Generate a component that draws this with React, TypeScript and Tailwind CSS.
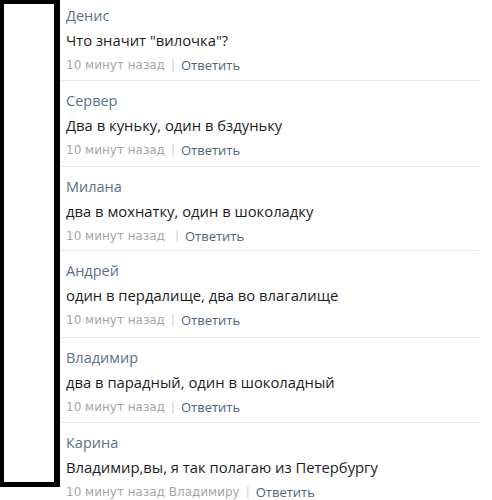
import React from "react";

const comments = [
  { name: "Денис", text: "Что значит \"вилочка\"?", extra: "", gap: false, pb: "pb-[3px]" },
  { name: "Сервер", text: "Два в куньку, один в бздуньку", extra: "", gap: false, pb: "pb-[4px]" },
  { name: "Милана", text: "два в мохнатку, один в шоколадку", extra: "", gap: true, pb: "pb-[2px]" },
  { name: "Андрей", text: "один в пердалище, два во влагалище", extra: "", gap: false, pb: "pb-[5px]" },
  { name: "Владимир", text: "два в парадный, один в шоколадный", extra: "", gap: false, pb: "pb-[3px]" },
  { name: "Карина", text: "Владимир,вы, я так полагаю из Петербургу", extra: "Владимиру", gap: false, pb: "pb-[3px]" },
];

export default function App() {
  return (
    <div className="w-[492px] h-[500px] bg-white overflow-hidden flex">
      <div className="w-[60px] h-[487px] shrink-0 border-l-[4px] border-t-[4px] border-r-[6px] border-b-[5px] border-black bg-white" />
      <div className="flex flex-col w-[419px]">
        {comments.map((c, i) => (
          <div
            key={i}
            className={
              (i === 0 ? "pt-[5px] " : "pt-[9px] border-t border-[#e6e8eb] ") +
              "pl-[6px] " + c.pb
            }
          >
            <div className="h-[22px] leading-[22px] text-[14.5px] text-[#5b7089] whitespace-nowrap" style={{ fontFamily: '"Open Sans", "DejaVu Sans", sans-serif' }}>
              {c.name}
            </div>
            <div className="h-[26px] leading-[26px] text-[14.8px] text-[#1c1c1c] whitespace-nowrap" style={{ fontFamily: '"Open Sans", "DejaVu Sans", sans-serif' }}>
              {c.text}
            </div>
            <div className="h-[24px] leading-[24px] text-[12px] text-[#a6a6a6] flex items-center whitespace-nowrap" style={{ fontFamily: '"DejaVu Sans", sans-serif' }}>
              <span>10 минут назад{c.extra ? " " + c.extra : ""}</span>
              <span className={(c.gap ? "ml-[10px] " : "ml-[6px] ") + "mr-[6px] text-[#d0d0d0]"}>|</span>
              <span className="text-[#4e6580]" style={{ fontFamily: '"Open Sans", sans-serif', fontSize: 13 }}>Ответить</span>
            </div>
          </div>
        ))}
      </div>
    </div>
  );
}
